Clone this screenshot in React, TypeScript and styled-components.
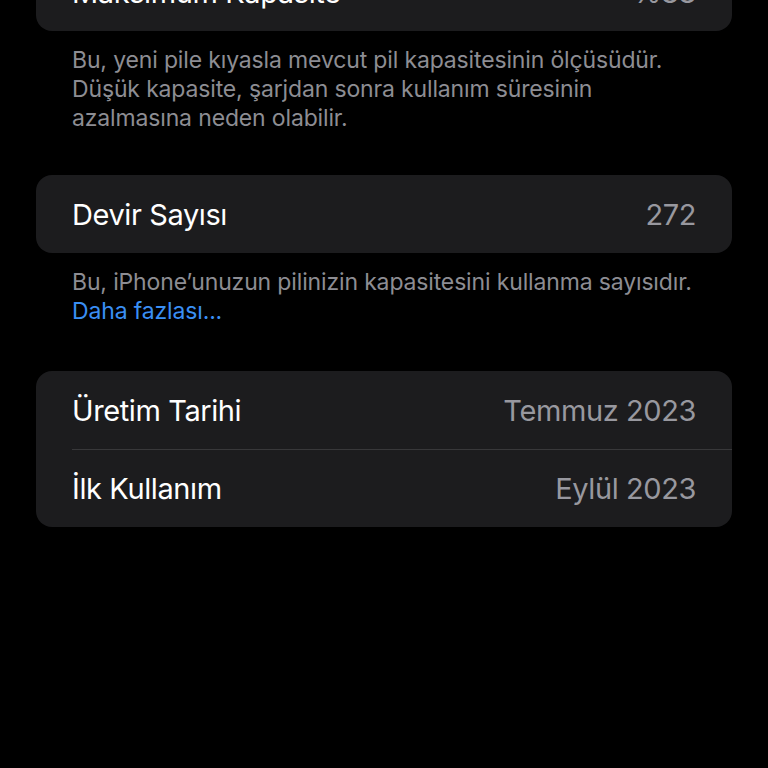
import styled, { createGlobalStyle } from 'styled-components';

const GlobalStyle = createGlobalStyle`
  html, body {
    margin: 0;
    padding: 0;
    background: #000;
  }
  body {
    font-family: Inter, "Noto Sans", sans-serif;
    -webkit-font-smoothing: antialiased;
  }
`;

const Page = styled.div`
  width: 768px;
  height: 768px;
  overflow: hidden;
  background: #000;
  box-sizing: border-box;
  padding: 0 36px;
`;

const Section = styled.section<{ $offset?: number }>`
  margin-top: ${(p) => p.$offset ?? 0}px;
`;

const Card = styled.div`
  background: #1c1c1e;
  border-radius: 16px;
  overflow: hidden;
`;

const Row = styled.div`
  position: relative;
  display: flex;
  align-items: center;
  justify-content: space-between;
  height: 78px;
  padding: 0 36px;

  & + &::before {
    content: '';
    position: absolute;
    top: 0;
    left: 36px;
    right: 0;
    height: 1px;
    background: #38383a;
  }
`;

const Label = styled.span`
  color: #fff;
  font-size: 29px;
  letter-spacing: -0.4px;
`;

const Value = styled.span`
  color: #98989f;
  font-size: 29px;
  letter-spacing: -0.4px;
`;

const Footnote = styled.p`
  margin: 15px 0 0;
  padding: 0 36px;
  color: #8d8d93;
  font-size: 23px;
  line-height: 29px;
  letter-spacing: -0.15px;
`;

const MoreLink = styled.a`
  color: #3a8ff4;
  text-decoration: none;
`;

type Item = { label: string; value: string };

function Group({ items }: { items: Item[] }) {
  return (
    <Card>
      {items.map((it) => (
        <Row key={it.label}>
          <Label>{it.label}</Label>
          <Value>{it.value}</Value>
        </Row>
      ))}
    </Card>
  );
}

export default function App() {
  return (
    <>
      <GlobalStyle />
      <Page>
        <Section $offset={-47}>
          <Group items={[{ label: 'Maksimum Kapasite', value: '%88' }]} />
          <Footnote>
            Bu, yeni pile kıyasla mevcut pil kapasitesinin ölçüsüdür.
            <br />
            Düşük kapasite, şarjdan sonra kullanım süresinin
            <br />
            azalmasına neden olabilir.
          </Footnote>
        </Section>
        <Section $offset={42}>
          <Group items={[{ label: 'Devir Sayısı', value: '272' }]} />
          <Footnote>
            Bu, iPhone’unuzun pilinizin kapasitesini kullanma sayısıdır.
            <br />
            <MoreLink href="#">Daha fazlası...</MoreLink>
          </Footnote>
        </Section>
        <Section $offset={45}>
          <Group
            items={[
              { label: 'Üretim Tarihi', value: 'Temmuz 2023' },
              { label: 'İlk Kullanım', value: 'Eylül 2023' },
            ]}
          />
        </Section>
      </Page>
    </>
  );
}
